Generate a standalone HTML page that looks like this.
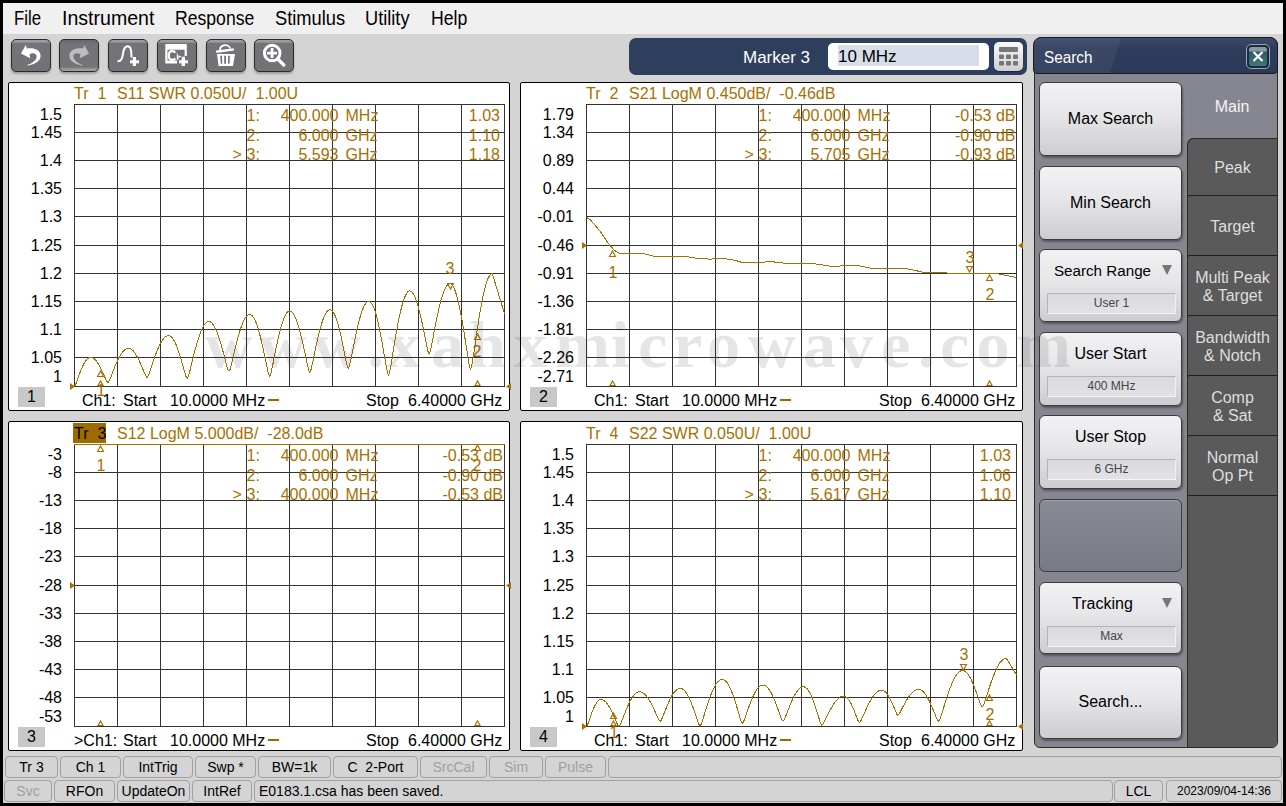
<!DOCTYPE html><html><head><meta charset="utf-8"><style>
*{box-sizing:border-box}
html,body{margin:0;padding:0}
body{width:1286px;height:806px;background:#000;position:relative;overflow:hidden;font-family:"Liberation Sans",sans-serif}
.abs{position:absolute}
#app{position:absolute;left:3px;top:3px;width:1280px;height:800px;background:#d4d4d4}
#menu{position:absolute;left:3px;top:3px;width:1280px;height:31px;background:#f0f0f0}
.mi{position:absolute;top:8px;font-size:20px;line-height:20px;color:#000;white-space:nowrap}
.tb{position:absolute;top:39px;width:40px;height:33px;border:1.5px solid #2a2a2a;border-radius:5px;
 background:linear-gradient(#a0a0a4 0px,#98989c 2px,#747478 3.5px,#727276 100%);box-shadow:0 2px 2px rgba(0,0,0,0.25);overflow:hidden}
.tb svg{position:absolute;left:-1.5px;top:-1.5px}
.panel{position:absolute;background:#fff;border:1px solid #000;border-radius:2px;box-sizing:content-box}
svg.ch{position:absolute}
.hd{position:absolute;font-size:16px;line-height:18px;color:#a67000;white-space:pre}
.yl{position:absolute;font-size:16px;line-height:18px;color:#000;width:80px;text-align:right;white-space:nowrap}
.ro{position:absolute;font-size:16px;line-height:18px;color:#a67000;white-space:pre}
.ro.r{text-align:right}
.chn{position:absolute;width:27px;height:20px;background:#c8c8c8;font-size:16px;line-height:20px;text-align:center;color:#000}
.ct{position:absolute;font-size:16px;line-height:18px;color:#000;white-space:pre}
.sb{position:absolute;height:22px;border:1px solid #a0a0a0;border-radius:4px;background:#d4d4d4;font-size:14px;line-height:20px;text-align:center;color:#000;white-space:nowrap}
.sb.dis{color:#a0a0a0}
.btn{position:absolute;left:1039px;width:143px;border:1px solid #3c3c3c;border-radius:6px;
 background:linear-gradient(#f2f2f4 0%,#e6e6e9 45%,#cdcdd1 100%);box-shadow:1px 2px 2px rgba(0,0,0,0.35)}
.btn .t{position:absolute;left:0;right:0;text-align:center;font-size:16px;color:#000;white-space:nowrap}
.btn .sub{position:absolute;left:7px;width:129px;height:21px;border:1px solid #b4b4b8;border-bottom-color:#f4f4f4;border-right-color:#f0f0f0;
 background:linear-gradient(#dadade,#e2e2e6);font-size:12px;line-height:19px;text-align:center;color:#444}
.btn .arr{position:absolute;right:9px;width:0;height:0;border-left:5px solid transparent;border-right:5px solid transparent;border-top:10px solid #777}
.tab{position:absolute;left:1187px;width:90px;background:#5a5a5a;border-left:1px solid #2c2c1e;border-top:1.5px solid #1e1e1e;border-top-left-radius:3px;padding-top:2px;
 color:#dedede;font-size:16px;line-height:18px;text-align:center;display:flex;align-items:center;justify-content:center}
</style></head><body>
<div id="app"></div>
<div id="menu"></div>

<div class="mi" style="left:14px;transform:scaleX(0.839);transform-origin:0 0">File</div>
<div class="mi" style="left:61.5px;transform:scaleX(0.978);transform-origin:0 0">Instrument</div>
<div class="mi" style="left:174.5px;transform:scaleX(0.880);transform-origin:0 0">Response</div>
<div class="mi" style="left:274.5px;transform:scaleX(0.915);transform-origin:0 0">Stimulus</div>
<div class="mi" style="left:365.2px;transform:scaleX(0.910);transform-origin:0 0">Utility</div>
<div class="mi" style="left:431px;transform:scaleX(0.883);transform-origin:0 0">Help</div>
<div class="tb" style="left:11px"><svg width="40" height="33" viewBox="0 0 40 33"><path d="M10,14.5 L14.8,6 L16,9.6 C21,8.4 29.6,9.6 29.6,17 C29.6,22.5 23,25.8 15.5,26.6 C21,24 25.6,21.5 25.6,17.5 C25.6,14 22,13.6 18.6,15 L19.2,19.2 Z" fill="#fff"/></svg></div>
<div class="tb" style="left:59px;background:linear-gradient(#68686c 0px,#747478 4px,#747478 27px,#9a9a9e 29px,#a0a0a4 31px)"><svg width="40" height="33" viewBox="0 0 40 33"><path d="M30,14.5 L25.2,6 L24,9.6 C19,8.4 10.4,9.6 10.4,17 C10.4,22.5 17,25.8 24.5,26.6 C19,24 14.4,21.5 14.4,17.5 C14.4,14 18,13.6 21.4,15 L20.8,19.2 Z" fill="#bdbdbd"/></svg></div>
<div class="tb" style="left:108px"><svg width="40" height="33" viewBox="0 0 40 33"><path d="M9.5,22.3 C12.5,22.3 14,21 14.8,16 C15.6,10 16.5,7.2 19.6,7.2 C22.6,7.2 23.3,10 23.5,18.5" fill="none" stroke="#fff" stroke-width="2"/><rect x="22" y="21.3" width="9" height="3" fill="#fff"/><rect x="24.8" y="18" width="3.2" height="9" fill="#fff"/></svg></div>
<div class="tb" style="left:157px"><svg width="40" height="33" viewBox="0 0 40 33"><path d="M8.3,5.5 Q8.3,5 9,5 H29 Q29.8,5 29.8,5.8 V17 H27.6 V10.7 H10.5 V21.5 H20 V24.5 H8.3 Z" fill="#fff"/><path d="M18.2,13.6 C17.6,12.6 16.6,12.2 15.3,12.2 C13,12.2 11.8,14 11.8,16.5 C11.8,19 13,20.8 15.3,20.8 C16.6,20.8 17.6,20.3 18.3,19.3" fill="none" stroke="#fff" stroke-width="2.2"/><path d="M19.8,12.3 V20.8 H21.4 V16.3 L24.5,17.6 L21.4,19 Z" fill="#fff"/><rect x="22" y="21.3" width="9" height="3" fill="#fff"/><rect x="24.6" y="17.7" width="3.4" height="9.3" fill="#fff"/></svg></div>
<div class="tb" style="left:206px"><svg width="40" height="33" viewBox="0 0 40 33"><path d="M10,11.6 L27.6,9.2 L28,11.4 L10.4,13.9 Z" fill="#fff"/><path d="M14,11 C14,5 23.6,4.8 24,9.6" fill="none" stroke="#fff" stroke-width="1.8"/><path d="M11,15 H29 L27,27 H12.6 Z" fill="#fff"/><path d="M14.3,16.7 H16.1 L16.2,24.8 H14.7 Z M18.2,16.7 H20 V24.8 H18.2 Z M22.1,16.7 H23.9 L23.5,24.8 H22 Z" fill="#727276"/></svg></div>
<div class="tb" style="left:254px"><svg width="40" height="33" viewBox="0 0 40 33"><circle cx="18.2" cy="14" r="7.8" fill="none" stroke="#fff" stroke-width="3"/><rect x="13" y="12.8" width="10" height="2.7" fill="#fff"/><rect x="16.7" y="9" width="2.7" height="10" fill="#fff"/><path d="M23.8,20 L29.8,26" stroke="#fff" stroke-width="3.4" stroke-linecap="round"/></svg></div>
<div class="abs" style="left:629px;top:38px;width:398px;height:37px;background:#2e3e5d;border-radius:7px"></div>
<div class="abs" style="left:743px;top:48px;font-size:17px;line-height:20px;color:#fff;white-space:nowrap">Marker 3</div>
<div class="abs" style="left:828px;top:43px;width:161px;height:27px;background:#fff;border-radius:5px"></div>
<div class="abs" style="left:838px;top:45px;width:141px;height:21px;background:#d8dee9"></div>
<div class="abs" style="left:838px;top:46.5px;font-size:17px;line-height:20px;color:#000;white-space:nowrap">10 MHz</div>
<div class="abs" style="left:994px;top:42px;width:29px;height:29px;border-radius:5px;background:linear-gradient(#fafafa,#e0e0e2 60%,#cfcfd2);box-shadow:0 1px 1px rgba(0,0,0,.4)">
<svg width="29" height="29" viewBox="0 0 29 29"><rect x="5" y="5" width="19" height="5" rx="1" fill="#777"/><g fill="#777"><rect x="5" y="12.5" width="5" height="4.5" rx="1"/><rect x="12" y="12.5" width="5" height="4.5" rx="1"/><rect x="19" y="12.5" width="5" height="4.5" rx="1"/><rect x="5" y="19" width="5" height="4.5" rx="1"/><rect x="12" y="19" width="5" height="4.5" rx="1"/><rect x="19" y="19" width="5" height="4.5" rx="1"/></g></svg></div>
<div class="panel" style="left:8px;top:82px;width:500px;height:327px"></div>
<svg class="ch" style="left:0;top:0" width="1286" height="806" viewBox="0 0 1286 806">
<rect x="74" y="104" width="431" height="1" fill="#333"/>
<rect x="74" y="132" width="431" height="1" fill="#333"/>
<rect x="74" y="160" width="431" height="1" fill="#333"/>
<rect x="74" y="188" width="431" height="1" fill="#333"/>
<rect x="74" y="216" width="431" height="1" fill="#333"/>
<rect x="74" y="245" width="431" height="1" fill="#333"/>
<rect x="74" y="273" width="431" height="1" fill="#333"/>
<rect x="74" y="301" width="431" height="1" fill="#333"/>
<rect x="74" y="329" width="431" height="1" fill="#333"/>
<rect x="74" y="357" width="431" height="1" fill="#333"/>
<rect x="74" y="386" width="431" height="1" fill="#333"/>
<rect x="74" y="104" width="1" height="283" fill="#333"/>
<rect x="117" y="104" width="1" height="283" fill="#333"/>
<rect x="160" y="104" width="1" height="283" fill="#333"/>
<rect x="203" y="104" width="1" height="283" fill="#333"/>
<rect x="246" y="104" width="1" height="283" fill="#333"/>
<rect x="289" y="104" width="1" height="283" fill="#333"/>
<rect x="332" y="104" width="1" height="283" fill="#333"/>
<rect x="375" y="104" width="1" height="283" fill="#333"/>
<rect x="418" y="104" width="1" height="283" fill="#333"/>
<rect x="461" y="104" width="1" height="283" fill="#333"/>
<rect x="504" y="104" width="1" height="283" fill="#333"/>
<polyline points="74.50,386.00 75.30,385.14 76.10,383.28 76.90,381.11 77.70,378.86 78.50,376.62 79.30,374.42 80.10,372.29 80.90,370.26 81.70,368.33 82.50,366.52 83.30,364.84 84.10,363.32 84.90,361.94 85.70,360.74 86.50,359.70 87.30,358.84 88.10,358.17 88.90,357.69 89.70,357.40 90.50,357.30 91.37,357.39 92.24,357.64 93.11,358.07 93.98,358.66 94.85,359.41 95.72,360.32 96.59,361.38 97.46,362.58 98.33,363.92 99.20,365.39 100.07,366.98 100.94,368.68 101.81,370.46 102.68,372.33 103.55,374.26 104.42,376.23 105.29,378.21 106.16,380.11 107.03,381.74 107.90,382.50 108.93,381.47 109.95,379.25 110.98,376.67 112.00,373.99 113.03,371.32 114.05,368.70 115.08,366.17 116.10,363.74 117.12,361.44 118.15,359.29 119.18,357.29 120.20,355.47 121.23,353.83 122.25,352.39 123.28,351.16 124.30,350.14 125.33,349.34 126.35,348.76 127.38,348.42 128.40,348.30 129.33,348.40 130.26,348.69 131.19,349.18 132.12,349.86 133.05,350.73 133.98,351.78 134.91,353.01 135.84,354.40 136.77,355.95 137.70,357.65 138.63,359.48 139.56,361.44 140.49,363.50 141.42,365.66 142.35,367.89 143.28,370.16 144.21,372.44 145.14,374.64 146.07,376.52 147.00,377.40 148.08,376.14 149.16,373.43 150.24,370.28 151.32,367.00 152.40,363.74 153.48,360.54 154.56,357.44 155.64,354.47 156.72,351.66 157.80,349.03 158.88,346.59 159.96,344.36 161.04,342.36 162.12,340.60 163.20,339.10 164.28,337.85 165.36,336.87 166.44,336.17 167.52,335.74 168.60,335.60 169.53,335.75 170.46,336.18 171.39,336.90 172.32,337.91 173.25,339.19 174.18,340.74 175.11,342.54 176.04,344.59 176.97,346.88 177.90,349.38 178.83,352.08 179.76,354.97 180.69,358.01 181.62,361.19 182.55,364.48 183.48,367.83 184.41,371.19 185.34,374.43 186.27,377.21 187.20,378.50 188.28,376.79 189.36,373.09 190.44,368.79 191.52,364.32 192.60,359.87 193.68,355.50 194.76,351.28 195.84,347.23 196.92,343.40 198.00,339.81 199.08,336.48 200.16,333.45 201.24,330.72 202.32,328.32 203.40,326.27 204.48,324.56 205.56,323.23 206.64,322.27 207.72,321.69 208.80,321.50 209.81,321.67 210.82,322.17 211.83,323.01 212.84,324.18 213.85,325.66 214.86,327.46 215.87,329.56 216.88,331.94 217.89,334.59 218.90,337.50 219.91,340.63 220.92,343.98 221.93,347.52 222.94,351.21 223.95,355.02 224.96,358.91 225.97,362.81 226.98,366.57 227.99,369.80 229.00,371.30 230.03,369.59 231.07,365.90 232.10,361.60 233.14,357.15 234.18,352.70 235.21,348.34 236.25,344.12 237.28,340.09 238.31,336.26 239.35,332.68 240.38,329.36 241.42,326.33 242.45,323.61 243.49,321.21 244.52,319.16 245.56,317.46 246.59,316.13 247.63,315.17 248.66,314.59 249.70,314.40 250.70,314.61 251.70,315.24 252.70,316.28 253.70,317.72 254.70,319.57 255.70,321.80 256.70,324.40 257.70,327.36 258.70,330.65 259.70,334.25 260.70,338.14 261.70,342.30 262.70,346.68 263.70,351.27 264.70,356.00 265.70,360.83 266.70,365.67 267.70,370.33 268.70,374.34 269.70,376.20 270.70,374.24 271.70,370.01 272.70,365.09 273.70,359.98 274.70,354.89 275.70,349.89 276.70,345.06 277.70,340.43 278.70,336.05 279.70,331.94 280.70,328.14 281.70,324.67 282.70,321.55 283.70,318.80 284.70,316.45 285.70,314.51 286.70,312.98 287.70,311.88 288.70,311.22 289.70,311.00 290.70,311.21 291.71,311.83 292.71,312.86 293.72,314.29 294.73,316.12 295.73,318.33 296.74,320.90 297.74,323.83 298.75,327.09 299.75,330.66 300.75,334.51 301.76,338.63 302.76,342.97 303.77,347.51 304.77,352.20 305.78,356.98 306.79,361.77 307.79,366.39 308.80,370.36 309.80,372.20 310.81,370.32 311.82,366.27 312.83,361.55 313.84,356.66 314.85,351.77 315.86,346.98 316.87,342.35 317.88,337.92 318.89,333.71 319.90,329.78 320.91,326.13 321.92,322.80 322.93,319.81 323.94,317.18 324.95,314.93 325.96,313.06 326.97,311.60 327.98,310.55 328.99,309.91 330.00,309.70 330.92,309.90 331.83,310.49 332.75,311.48 333.66,312.86 334.57,314.61 335.49,316.73 336.41,319.20 337.32,322.01 338.24,325.13 339.15,328.56 340.06,332.25 340.98,336.20 341.89,340.37 342.81,344.72 343.73,349.21 344.64,353.80 345.56,358.40 346.47,362.83 347.38,366.63 348.30,368.40 349.32,366.38 350.35,362.04 351.38,356.98 352.40,351.74 353.43,346.50 354.45,341.37 355.48,336.40 356.50,331.65 357.53,327.14 358.55,322.92 359.57,319.01 360.60,315.45 361.62,312.24 362.65,309.42 363.68,307.00 364.70,305.00 365.73,303.43 366.75,302.31 367.78,301.63 368.80,301.40 369.79,301.65 370.77,302.40 371.75,303.64 372.74,305.36 373.73,307.56 374.71,310.22 375.69,313.32 376.68,316.85 377.67,320.77 378.65,325.07 379.63,329.72 380.62,334.67 381.61,339.90 382.59,345.36 383.57,351.01 384.56,356.77 385.55,362.54 386.53,368.10 387.51,372.88 388.50,375.10 389.56,372.57 390.62,367.11 391.68,360.75 392.74,354.16 393.80,347.58 394.86,341.13 395.92,334.89 396.98,328.91 398.04,323.25 399.10,317.95 400.16,313.03 401.22,308.55 402.28,304.52 403.34,300.98 404.40,297.94 405.46,295.43 406.52,293.46 407.58,292.04 408.64,291.19 409.70,290.90 410.67,291.11 411.64,291.75 412.61,292.81 413.58,294.29 414.55,296.17 415.52,298.44 416.49,301.09 417.46,304.11 418.43,307.46 419.40,311.14 420.37,315.11 421.34,319.34 422.31,323.81 423.28,328.48 424.25,333.31 425.22,338.23 426.19,343.16 427.16,347.92 428.13,352.01 429.10,353.90 430.14,351.78 431.18,347.22 432.22,341.90 433.26,336.39 434.30,330.89 435.34,325.50 436.38,320.28 437.42,315.28 438.46,310.55 439.50,306.11 440.54,302.01 441.58,298.26 442.62,294.89 443.66,291.93 444.70,289.39 445.74,287.29 446.78,285.64 447.82,284.45 448.86,283.74 449.90,283.50 450.94,283.79 451.97,284.66 453.00,286.10 454.04,288.10 455.07,290.66 456.11,293.75 457.14,297.35 458.18,301.44 459.21,306.00 460.25,311.00 461.29,316.39 462.32,322.14 463.36,328.22 464.39,334.56 465.43,341.12 466.46,347.81 467.50,354.51 468.53,360.98 469.56,366.53 470.60,369.10 471.69,366.22 472.77,360.03 473.86,352.81 474.94,345.32 476.03,337.85 477.11,330.53 478.19,323.44 479.28,316.66 480.37,310.23 481.45,304.21 482.54,298.63 483.62,293.54 484.71,288.97 485.79,284.94 486.88,281.49 487.96,278.64 489.05,276.40 490.13,274.79 491.22,273.82 492.30,273.50 504.5,313.7" fill="none" stroke="#a67000" stroke-width="1" shape-rendering="crispEdges"/>
<path d="M97.5,376.5 L100.5,371.0 L103.5,376.5 Z" fill="none" stroke="#a67000" stroke-width="1.2"/><path d="M98.0,385.5 L100.5,381.0 L103.0,385.5 Z" fill="none" stroke="#a67000" stroke-width="1.2"/><text x="101" y="396" font-family="Liberation Sans" font-size="16" fill="#a67000" text-anchor="middle">1</text><path d="M447.5,283.5 L450.5,289.0 L453.5,283.5 Z" fill="none" stroke="#a67000" stroke-width="1.2"/><text x="450" y="274" font-family="Liberation Sans" font-size="16" fill="#a67000" text-anchor="middle">3</text><path d="M474.5,339.5 L477.5,334.0 L480.5,339.5 Z" fill="none" stroke="#a67000" stroke-width="1.2"/><text x="477" y="357" font-family="Liberation Sans" font-size="16" fill="#a67000" text-anchor="middle">2</text><path d="M475.0,385.5 L477.5,381.0 L480.0,385.5 Z" fill="none" stroke="#a67000" stroke-width="1.2"/><path d="M70,383 L75,386.5 L70,390 Z" fill="#a67000"/><path d="M511,383 L506,386.5 L511,390 Z" fill="#a67000"/>
</svg>
<div class="hd" style="left:74px;top:85px">Tr&nbsp;&nbsp;1</div>
<div class="hd" style="left:117px;top:85px">S11 SWR 0.050U/&nbsp;&nbsp;1.00U</div>
<div class="yl" style="left:-18px;top:106px">1.5</div>
<div class="yl" style="left:-18px;top:124px">1.45</div>
<div class="yl" style="left:-18px;top:152px">1.4</div>
<div class="yl" style="left:-18px;top:180px">1.35</div>
<div class="yl" style="left:-18px;top:208px">1.3</div>
<div class="yl" style="left:-18px;top:237px">1.25</div>
<div class="yl" style="left:-18px;top:265px">1.2</div>
<div class="yl" style="left:-18px;top:293px">1.15</div>
<div class="yl" style="left:-18px;top:321px">1.1</div>
<div class="yl" style="left:-18px;top:349px">1.05</div>
<div class="yl" style="left:-18px;top:368px">1</div>
<div class="ro" style="left:246.5px;top:107.0px">1:</div>
<div class="ro r" style="left:238.5px;top:107.0px;width:100px">400.000</div>
<div class="ro" style="left:345.5px;top:107.0px">MHz</div>
<div class="ro r" style="left:350px;top:107.0px;width:150px">1.03</div>
<div class="ro" style="left:246.5px;top:126.6px">2:</div>
<div class="ro r" style="left:238.5px;top:126.6px;width:100px">6.000</div>
<div class="ro" style="left:345.5px;top:126.6px">GHz</div>
<div class="ro r" style="left:350px;top:126.6px;width:150px">1.10</div>
<div class="ro" style="left:232.5px;top:146.2px">&gt;</div>
<div class="ro" style="left:246.5px;top:146.2px">3:</div>
<div class="ro r" style="left:238.5px;top:146.2px;width:100px">5.593</div>
<div class="ro" style="left:345.5px;top:146.2px">GHz</div>
<div class="ro r" style="left:350px;top:146.2px;width:150px">1.18</div>
<div class="chn" style="left:18px;top:387px">1</div>
<div class="ct" style="left:82px;top:392px">Ch1:</div>
<div class="ct" style="left:123px;top:392px">Start</div>
<div class="ct" style="left:170px;top:392px">10.0000 MHz</div>
<div style="position:absolute;left:268px;top:399px;width:11px;height:2px;background:#9c6800"></div>
<div class="ct" style="left:366px;top:392px">Stop</div>
<div class="ct" style="left:408px;top:392px">6.40000 GHz</div>
<div class="panel" style="left:520px;top:82px;width:501px;height:327px"></div>
<svg class="ch" style="left:0;top:0" width="1286" height="806" viewBox="0 0 1286 806">
<rect x="586" y="104" width="431" height="1" fill="#333"/>
<rect x="586" y="132" width="431" height="1" fill="#333"/>
<rect x="586" y="160" width="431" height="1" fill="#333"/>
<rect x="586" y="188" width="431" height="1" fill="#333"/>
<rect x="586" y="216" width="431" height="1" fill="#333"/>
<rect x="586" y="245" width="431" height="1" fill="#333"/>
<rect x="586" y="273" width="431" height="1" fill="#333"/>
<rect x="586" y="301" width="431" height="1" fill="#333"/>
<rect x="586" y="329" width="431" height="1" fill="#333"/>
<rect x="586" y="357" width="431" height="1" fill="#333"/>
<rect x="586" y="386" width="431" height="1" fill="#333"/>
<rect x="586" y="104" width="1" height="283" fill="#333"/>
<rect x="629" y="104" width="1" height="283" fill="#333"/>
<rect x="672" y="104" width="1" height="283" fill="#333"/>
<rect x="715" y="104" width="1" height="283" fill="#333"/>
<rect x="758" y="104" width="1" height="283" fill="#333"/>
<rect x="801" y="104" width="1" height="283" fill="#333"/>
<rect x="844" y="104" width="1" height="283" fill="#333"/>
<rect x="887" y="104" width="1" height="283" fill="#333"/>
<rect x="930" y="104" width="1" height="283" fill="#333"/>
<rect x="973" y="104" width="1" height="283" fill="#333"/>
<rect x="1016" y="104" width="1" height="283" fill="#333"/>
<polyline points="586.5,217.5 590,219.5 600,231 608,243 614,250 618,252.5 620,253.5 643,253.5 653,256 675,256 686,256.5 698,258.5 708,259 712,259 720,258.5 724,258.5 736,260.5 742,262.5 760,262.5 770,261.5 792,264 810,263 832,266.5 855,265 875,269 906,268.5 922,272 960,273.5 996,273.5 1016.5,277.5" fill="none" stroke="#a67000" stroke-width="1" shape-rendering="crispEdges"/>
<path d="M609.5,256.5 L612.5,251.0 L615.5,256.5 Z" fill="none" stroke="#a67000" stroke-width="1.2"/><text x="613" y="278" font-family="Liberation Sans" font-size="16" fill="#a67000" text-anchor="middle">1</text><path d="M610.0,385.5 L612.5,381.0 L615.0,385.5 Z" fill="none" stroke="#a67000" stroke-width="1.2"/><path d="M966.5,266.5 L969.5,272.0 L972.5,266.5 Z" fill="none" stroke="#a67000" stroke-width="1.2"/><text x="970" y="263" font-family="Liberation Sans" font-size="16" fill="#a67000" text-anchor="middle">3</text><path d="M986.5,280.5 L989.5,275.0 L992.5,280.5 Z" fill="none" stroke="#a67000" stroke-width="1.2"/><text x="990" y="300" font-family="Liberation Sans" font-size="16" fill="#a67000" text-anchor="middle">2</text><path d="M987.0,385.5 L989.5,381.0 L992.0,385.5 Z" fill="none" stroke="#a67000" stroke-width="1.2"/><path d="M582,242 L587,245.5 L582,249 Z" fill="#a67000"/><path d="M1023,242 L1018,245.5 L1023,249 Z" fill="#a67000"/>
</svg>
<div class="hd" style="left:586px;top:85px">Tr&nbsp;&nbsp;2</div>
<div class="hd" style="left:629px;top:85px">S21 LogM 0.450dB/&nbsp;&nbsp;-0.46dB</div>
<div class="yl" style="left:494px;top:106px">1.79</div>
<div class="yl" style="left:494px;top:124px">1.34</div>
<div class="yl" style="left:494px;top:152px">0.89</div>
<div class="yl" style="left:494px;top:180px">0.44</div>
<div class="yl" style="left:494px;top:208px">-0.01</div>
<div class="yl" style="left:494px;top:237px">-0.46</div>
<div class="yl" style="left:494px;top:265px">-0.91</div>
<div class="yl" style="left:494px;top:293px">-1.36</div>
<div class="yl" style="left:494px;top:321px">-1.81</div>
<div class="yl" style="left:494px;top:349px">-2.26</div>
<div class="yl" style="left:494px;top:368px">-2.71</div>
<div class="ro" style="left:758.5px;top:107.0px">1:</div>
<div class="ro r" style="left:750.5px;top:107.0px;width:100px">400.000</div>
<div class="ro" style="left:857.5px;top:107.0px">MHz</div>
<div class="ro r" style="left:865.5px;top:107.0px;width:150px">-0.53 dB</div>
<div class="ro" style="left:758.5px;top:126.6px">2:</div>
<div class="ro r" style="left:750.5px;top:126.6px;width:100px">6.000</div>
<div class="ro" style="left:857.5px;top:126.6px">GHz</div>
<div class="ro r" style="left:865.5px;top:126.6px;width:150px">-0.90 dB</div>
<div class="ro" style="left:744.5px;top:146.2px">&gt;</div>
<div class="ro" style="left:758.5px;top:146.2px">3:</div>
<div class="ro r" style="left:750.5px;top:146.2px;width:100px">5.705</div>
<div class="ro" style="left:857.5px;top:146.2px">GHz</div>
<div class="ro r" style="left:865.5px;top:146.2px;width:150px">-0.93 dB</div>
<div class="chn" style="left:530px;top:387px">2</div>
<div class="ct" style="left:594px;top:392px">Ch1:</div>
<div class="ct" style="left:635px;top:392px">Start</div>
<div class="ct" style="left:682px;top:392px">10.0000 MHz</div>
<div style="position:absolute;left:780px;top:399px;width:11px;height:2px;background:#9c6800"></div>
<div class="ct" style="left:879px;top:392px">Stop</div>
<div class="ct" style="left:921px;top:392px">6.40000 GHz</div>
<div class="panel" style="left:8px;top:421px;width:500px;height:328px"></div>
<svg class="ch" style="left:0;top:0" width="1286" height="806" viewBox="0 0 1286 806">
<rect x="74" y="444" width="431" height="1" fill="#333"/>
<rect x="74" y="472" width="431" height="1" fill="#333"/>
<rect x="74" y="500" width="431" height="1" fill="#333"/>
<rect x="74" y="528" width="431" height="1" fill="#333"/>
<rect x="74" y="556" width="431" height="1" fill="#333"/>
<rect x="74" y="585" width="431" height="1" fill="#333"/>
<rect x="74" y="613" width="431" height="1" fill="#333"/>
<rect x="74" y="641" width="431" height="1" fill="#333"/>
<rect x="74" y="669" width="431" height="1" fill="#333"/>
<rect x="74" y="697" width="431" height="1" fill="#333"/>
<rect x="74" y="726" width="431" height="1" fill="#333"/>
<rect x="74" y="444" width="1" height="283" fill="#333"/>
<rect x="117" y="444" width="1" height="283" fill="#333"/>
<rect x="160" y="444" width="1" height="283" fill="#333"/>
<rect x="203" y="444" width="1" height="283" fill="#333"/>
<rect x="246" y="444" width="1" height="283" fill="#333"/>
<rect x="289" y="444" width="1" height="283" fill="#333"/>
<rect x="332" y="444" width="1" height="283" fill="#333"/>
<rect x="375" y="444" width="1" height="283" fill="#333"/>
<rect x="418" y="444" width="1" height="283" fill="#333"/>
<rect x="461" y="444" width="1" height="283" fill="#333"/>
<rect x="504" y="444" width="1" height="283" fill="#333"/>
<rect x="74" y="444" width="431" height="1" fill="#a67000"/>
<path d="M97.5,451.5 L100.5,446.0 L103.5,451.5 Z" fill="none" stroke="#a67000" stroke-width="1.2"/><text x="101" y="471" font-family="Liberation Sans" font-size="16" fill="#a67000" text-anchor="middle">1</text><path d="M98.0,725.5 L100.5,721.0 L103.0,725.5 Z" fill="none" stroke="#a67000" stroke-width="1.2"/><path d="M474.5,450.5 L477.5,445.0 L480.5,450.5 Z" fill="none" stroke="#a67000" stroke-width="1.2"/><text x="477" y="471" font-family="Liberation Sans" font-size="16" fill="#a67000" text-anchor="middle">2</text><path d="M475.0,725.5 L477.5,721.0 L480.0,725.5 Z" fill="none" stroke="#a67000" stroke-width="1.2"/><path d="M70,582 L75,585.5 L70,589 Z" fill="#a67000"/><path d="M511,582 L506,585.5 L511,589 Z" fill="#a67000"/>
</svg>
<div style="position:absolute;left:73px;top:423px;width:33px;height:20px;background:#9e6b00"></div>
<div class="hd" style="left:74px;top:425px;color:#000">Tr&nbsp;&nbsp;3</div>
<div class="hd" style="left:117px;top:425px">S12 LogM 5.000dB/&nbsp;&nbsp;-28.0dB</div>
<div class="yl" style="left:-18px;top:446px">-3</div>
<div class="yl" style="left:-18px;top:464px">-8</div>
<div class="yl" style="left:-18px;top:492px">-13</div>
<div class="yl" style="left:-18px;top:520px">-18</div>
<div class="yl" style="left:-18px;top:548px">-23</div>
<div class="yl" style="left:-18px;top:577px">-28</div>
<div class="yl" style="left:-18px;top:605px">-33</div>
<div class="yl" style="left:-18px;top:633px">-38</div>
<div class="yl" style="left:-18px;top:661px">-43</div>
<div class="yl" style="left:-18px;top:689px">-48</div>
<div class="yl" style="left:-18px;top:708px">-53</div>
<div class="ro" style="left:246.5px;top:447.0px">1:</div>
<div class="ro r" style="left:238.5px;top:447.0px;width:100px">400.000</div>
<div class="ro" style="left:345.5px;top:447.0px">MHz</div>
<div class="ro r" style="left:353px;top:447.0px;width:150px">-0.53 dB</div>
<div class="ro" style="left:246.5px;top:466.6px">2:</div>
<div class="ro r" style="left:238.5px;top:466.6px;width:100px">6.000</div>
<div class="ro" style="left:345.5px;top:466.6px">GHz</div>
<div class="ro r" style="left:353px;top:466.6px;width:150px">-0.90 dB</div>
<div class="ro" style="left:232.5px;top:486.2px">&gt;</div>
<div class="ro" style="left:246.5px;top:486.2px">3:</div>
<div class="ro r" style="left:238.5px;top:486.2px;width:100px">400.000</div>
<div class="ro" style="left:345.5px;top:486.2px">MHz</div>
<div class="ro r" style="left:353px;top:486.2px;width:150px">-0.53 dB</div>
<div class="chn" style="left:18px;top:727px">3</div>
<div class="ct" style="left:74px;top:732px">&gt;Ch1:</div>
<div class="ct" style="left:123px;top:732px">Start</div>
<div class="ct" style="left:170px;top:732px">10.0000 MHz</div>
<div style="position:absolute;left:268px;top:739px;width:11px;height:2px;background:#9c6800"></div>
<div class="ct" style="left:366px;top:732px">Stop</div>
<div class="ct" style="left:408px;top:732px">6.40000 GHz</div>
<div class="panel" style="left:520px;top:421px;width:501px;height:328px"></div>
<svg class="ch" style="left:0;top:0" width="1286" height="806" viewBox="0 0 1286 806">
<rect x="586" y="444" width="431" height="1" fill="#333"/>
<rect x="586" y="472" width="431" height="1" fill="#333"/>
<rect x="586" y="500" width="431" height="1" fill="#333"/>
<rect x="586" y="528" width="431" height="1" fill="#333"/>
<rect x="586" y="556" width="431" height="1" fill="#333"/>
<rect x="586" y="585" width="431" height="1" fill="#333"/>
<rect x="586" y="613" width="431" height="1" fill="#333"/>
<rect x="586" y="641" width="431" height="1" fill="#333"/>
<rect x="586" y="669" width="431" height="1" fill="#333"/>
<rect x="586" y="697" width="431" height="1" fill="#333"/>
<rect x="586" y="726" width="431" height="1" fill="#333"/>
<rect x="586" y="444" width="1" height="283" fill="#333"/>
<rect x="629" y="444" width="1" height="283" fill="#333"/>
<rect x="672" y="444" width="1" height="283" fill="#333"/>
<rect x="715" y="444" width="1" height="283" fill="#333"/>
<rect x="758" y="444" width="1" height="283" fill="#333"/>
<rect x="801" y="444" width="1" height="283" fill="#333"/>
<rect x="844" y="444" width="1" height="283" fill="#333"/>
<rect x="887" y="444" width="1" height="283" fill="#333"/>
<rect x="930" y="444" width="1" height="283" fill="#333"/>
<rect x="973" y="444" width="1" height="283" fill="#333"/>
<rect x="1016" y="444" width="1" height="283" fill="#333"/>
<polyline points="586.50,726.30 587.23,725.49 587.95,723.76 588.67,721.73 589.40,719.63 590.12,717.54 590.85,715.49 591.58,713.50 592.30,711.60 593.02,709.80 593.75,708.11 594.48,706.55 595.20,705.12 595.92,703.84 596.65,702.71 597.38,701.74 598.10,700.94 598.83,700.31 599.55,699.86 600.27,699.59 601.00,699.50 601.89,699.59 602.79,699.86 603.68,700.31 604.58,700.94 605.48,701.74 606.37,702.71 607.26,703.84 608.16,705.12 609.05,706.55 609.95,708.11 610.85,709.80 611.74,711.60 612.63,713.50 613.53,715.49 614.42,717.54 615.32,719.63 616.22,721.73 617.11,723.76 618.00,725.49 618.90,726.30 619.93,725.26 620.97,723.02 622.00,720.40 623.04,717.69 624.08,714.99 625.11,712.34 626.14,709.78 627.18,707.32 628.22,704.99 629.25,702.81 630.28,700.80 631.32,698.95 632.36,697.30 633.39,695.84 634.42,694.59 635.46,693.56 636.50,692.75 637.53,692.17 638.57,691.82 639.60,691.70 640.63,691.80 641.66,692.10 642.69,692.60 643.72,693.29 644.75,694.17 645.78,695.23 646.81,696.47 647.84,697.88 648.87,699.46 649.90,701.18 650.93,703.03 651.96,705.02 652.99,707.11 654.02,709.30 655.05,711.56 656.08,713.86 657.11,716.17 658.14,718.40 659.17,720.31 660.20,721.20 661.21,720.21 662.21,718.08 663.22,715.59 664.22,713.02 665.23,710.45 666.23,707.93 667.24,705.49 668.24,703.15 669.25,700.94 670.25,698.87 671.25,696.95 672.26,695.20 673.26,693.62 674.27,692.24 675.27,691.05 676.28,690.07 677.28,689.30 678.29,688.75 679.29,688.41 680.30,688.30 681.28,688.43 682.27,688.80 683.25,689.43 684.24,690.31 685.22,691.42 686.21,692.76 687.19,694.34 688.18,696.12 689.16,698.11 690.15,700.28 691.13,702.63 692.12,705.14 693.11,707.79 694.09,710.55 695.08,713.41 696.06,716.32 697.04,719.24 698.03,722.06 699.01,724.48 700.00,725.60 701.12,724.21 702.23,721.21 703.35,717.73 704.46,714.11 705.58,710.50 706.69,706.96 707.80,703.54 708.92,700.26 710.03,697.15 711.15,694.24 712.26,691.55 713.38,689.08 714.50,686.88 715.61,684.93 716.72,683.26 717.84,681.88 718.95,680.80 720.07,680.03 721.18,679.56 722.30,679.40 723.30,679.55 724.31,679.99 725.31,680.72 726.32,681.74 727.32,683.05 728.33,684.62 729.33,686.45 730.34,688.54 731.34,690.86 732.35,693.40 733.36,696.15 734.36,699.08 735.37,702.18 736.37,705.41 737.38,708.75 738.38,712.16 739.38,715.57 740.39,718.86 741.39,721.69 742.40,723.00 743.43,721.86 744.46,719.39 745.49,716.52 746.52,713.55 747.55,710.58 748.58,707.67 749.61,704.85 750.64,702.15 751.67,699.60 752.70,697.21 753.73,694.99 754.76,692.97 755.79,691.15 756.82,689.55 757.85,688.18 758.88,687.04 759.91,686.15 760.94,685.51 761.97,685.13 763.00,685.00 764.00,685.12 765.00,685.49 766.00,686.10 767.00,686.95 768.00,688.03 769.00,689.33 770.00,690.86 771.00,692.59 772.00,694.52 773.00,696.63 774.00,698.91 775.00,701.34 776.00,703.91 777.00,706.59 778.00,709.37 779.00,712.20 780.00,715.03 781.00,717.76 782.00,720.11 783.00,721.20 784.02,720.17 785.05,717.93 786.08,715.34 787.10,712.64 788.12,709.96 789.15,707.32 790.17,704.77 791.20,702.33 792.23,700.02 793.25,697.85 794.27,695.84 795.30,694.01 796.33,692.37 797.35,690.92 798.38,689.68 799.40,688.65 800.42,687.84 801.45,687.27 802.48,686.92 803.50,686.80 804.41,686.93 805.33,687.32 806.25,687.97 807.16,688.86 808.08,690.01 808.99,691.40 809.90,693.01 810.82,694.85 811.74,696.89 812.65,699.13 813.56,701.55 814.48,704.14 815.39,706.86 816.31,709.71 817.22,712.65 818.14,715.65 819.05,718.66 819.97,721.56 820.88,724.05 821.80,725.20 822.89,724.32 823.99,722.44 825.08,720.24 826.18,717.96 827.27,715.69 828.37,713.46 829.47,711.30 830.56,709.24 831.65,707.28 832.75,705.45 833.85,703.75 834.94,702.20 836.03,700.81 837.13,699.58 838.23,698.53 839.32,697.66 840.42,696.98 841.51,696.49 842.61,696.20 843.70,696.10 844.48,696.19 845.26,696.46 846.04,696.90 846.82,697.52 847.60,698.31 848.38,699.26 849.16,700.37 849.94,701.63 850.72,703.04 851.50,704.58 852.28,706.24 853.06,708.02 853.84,709.89 854.62,711.85 855.40,713.87 856.18,715.93 856.96,718.00 857.74,719.99 858.52,721.71 859.30,722.50 860.42,721.53 861.54,719.42 862.66,716.98 863.78,714.44 864.90,711.91 866.02,709.43 867.14,707.03 868.26,704.73 869.38,702.55 870.50,700.51 871.62,698.62 872.74,696.89 873.86,695.34 874.98,693.98 876.10,692.81 877.22,691.84 878.34,691.08 879.46,690.54 880.58,690.21 881.70,690.10 882.50,690.18 883.31,690.44 884.12,690.86 884.92,691.44 885.73,692.19 886.53,693.09 887.34,694.14 888.14,695.34 888.95,696.67 889.75,698.13 890.55,699.71 891.36,701.39 892.16,703.16 892.97,705.01 893.77,706.93 894.58,708.88 895.38,710.84 896.19,712.73 897.00,714.35 897.80,715.10 898.83,714.33 899.87,712.66 900.90,710.72 901.94,708.71 902.97,706.70 904.01,704.73 905.04,702.83 906.08,701.00 907.12,699.27 908.15,697.66 909.18,696.16 910.22,694.79 911.25,693.56 912.29,692.48 913.33,691.55 914.36,690.78 915.39,690.18 916.43,689.75 917.47,689.49 918.50,689.40 919.50,689.51 920.51,689.83 921.51,690.37 922.52,691.11 923.52,692.06 924.53,693.21 925.53,694.55 926.54,696.07 927.54,697.76 928.55,699.61 929.56,701.62 930.56,703.76 931.57,706.01 932.57,708.37 933.58,710.81 934.58,713.29 935.59,715.78 936.59,718.18 937.60,720.24 938.60,721.20 939.80,719.68 940.99,716.39 942.19,712.56 943.38,708.59 944.58,704.63 945.77,700.74 946.97,696.99 948.16,693.39 949.36,689.98 950.55,686.79 951.75,683.83 952.94,681.13 954.13,678.70 955.33,676.57 956.52,674.74 957.72,673.23 958.91,672.04 960.11,671.19 961.30,670.67 962.50,670.50 963.49,670.62 964.47,670.99 965.46,671.61 966.44,672.46 967.42,673.54 968.41,674.86 969.39,676.39 970.38,678.13 971.37,680.07 972.35,682.19 973.34,684.49 974.32,686.93 975.31,689.52 976.29,692.21 977.28,695.00 978.26,697.85 979.25,700.70 980.23,703.45 981.22,705.81 982.20,706.90 983.41,705.44 984.61,702.28 985.82,698.60 987.02,694.79 988.23,690.98 989.43,687.25 990.63,683.64 991.84,680.19 993.04,676.91 994.25,673.84 995.46,671.00 996.66,668.41 997.87,666.08 999.07,664.03 1000.27,662.27 1001.48,660.82 1002.68,659.68 1003.89,658.86 1005.09,658.36 1006.30,658.20 1016.5,674.9" fill="none" stroke="#a67000" stroke-width="1" shape-rendering="crispEdges"/>
<path d="M610.5,718.5 L613.5,713.0 L616.5,718.5 Z" fill="none" stroke="#a67000" stroke-width="1.2"/><text x="614" y="738" font-family="Liberation Sans" font-size="16" fill="#a67000" text-anchor="middle">1</text><path d="M611.0,725.5 L613.5,721.0 L616.0,725.5 Z" fill="none" stroke="#a67000" stroke-width="1.2"/><path d="M960.5,664.5 L963.5,670.0 L966.5,664.5 Z" fill="none" stroke="#a67000" stroke-width="1.2"/><text x="964" y="660" font-family="Liberation Sans" font-size="16" fill="#a67000" text-anchor="middle">3</text><path d="M986.5,700.5 L989.5,695.0 L992.5,700.5 Z" fill="none" stroke="#a67000" stroke-width="1.2"/><text x="990" y="720" font-family="Liberation Sans" font-size="16" fill="#a67000" text-anchor="middle">2</text><path d="M987.0,725.5 L989.5,721.0 L992.0,725.5 Z" fill="none" stroke="#a67000" stroke-width="1.2"/><path d="M582,723 L587,726.5 L582,730 Z" fill="#a67000"/><path d="M1023,723 L1018,726.5 L1023,730 Z" fill="#a67000"/>
</svg>
<div class="hd" style="left:586px;top:425px">Tr&nbsp;&nbsp;4</div>
<div class="hd" style="left:629px;top:425px">S22 SWR 0.050U/&nbsp;&nbsp;1.00U</div>
<div class="yl" style="left:494px;top:446px">1.5</div>
<div class="yl" style="left:494px;top:464px">1.45</div>
<div class="yl" style="left:494px;top:492px">1.4</div>
<div class="yl" style="left:494px;top:520px">1.35</div>
<div class="yl" style="left:494px;top:548px">1.3</div>
<div class="yl" style="left:494px;top:577px">1.25</div>
<div class="yl" style="left:494px;top:605px">1.2</div>
<div class="yl" style="left:494px;top:633px">1.15</div>
<div class="yl" style="left:494px;top:661px">1.1</div>
<div class="yl" style="left:494px;top:689px">1.05</div>
<div class="yl" style="left:494px;top:708px">1</div>
<div class="ro" style="left:758.5px;top:447.0px">1:</div>
<div class="ro r" style="left:750.5px;top:447.0px;width:100px">400.000</div>
<div class="ro" style="left:857.5px;top:447.0px">MHz</div>
<div class="ro r" style="left:861px;top:447.0px;width:150px">1.03</div>
<div class="ro" style="left:758.5px;top:466.6px">2:</div>
<div class="ro r" style="left:750.5px;top:466.6px;width:100px">6.000</div>
<div class="ro" style="left:857.5px;top:466.6px">GHz</div>
<div class="ro r" style="left:861px;top:466.6px;width:150px">1.06</div>
<div class="ro" style="left:744.5px;top:486.2px">&gt;</div>
<div class="ro" style="left:758.5px;top:486.2px">3:</div>
<div class="ro r" style="left:750.5px;top:486.2px;width:100px">5.617</div>
<div class="ro" style="left:857.5px;top:486.2px">GHz</div>
<div class="ro r" style="left:861px;top:486.2px;width:150px">1.10</div>
<div class="chn" style="left:530px;top:727px">4</div>
<div class="ct" style="left:594px;top:732px">Ch1:</div>
<div class="ct" style="left:635px;top:732px">Start</div>
<div class="ct" style="left:682px;top:732px">10.0000 MHz</div>
<div style="position:absolute;left:780px;top:739px;width:11px;height:2px;background:#9c6800"></div>
<div class="ct" style="left:879px;top:732px">Stop</div>
<div class="ct" style="left:921px;top:732px">6.40000 GHz</div>
<div class="abs" style="left:1034px;top:37px;width:244px;height:711px;background:#868690;border:1px solid #2c2c20;border-radius:8px 8px 6px 6px"></div>
<div class="abs" style="left:1187px;top:138px;width:90px;height:609px;background:#5a5a5a;border-left:1px solid #2c2c1e;border-top:1px solid #2c2c1e;border-top-left-radius:7px;border-bottom-right-radius:5px"></div>
<div class="tab" style="top:138px;height:57px;border-top:1px solid #2c2c1e;border-top-left-radius:7px;">Peak</div>
<div class="tab" style="top:195px;height:60px;">Target</div>
<div class="tab" style="top:255px;height:60px;">Multi Peak<br>&amp; Target</div>
<div class="tab" style="top:315px;height:60px;">Bandwidth<br>&amp; Notch</div>
<div class="tab" style="top:375px;height:60px;">Comp<br>&amp; Sat</div>
<div class="tab" style="top:435px;height:60px;">Normal<br>Op Pt</div>
<div class="abs" style="left:1187px;top:495px;width:90px;height:1px;background:#1e1e1e"></div>
<div class="abs" style="left:1187px;top:98px;width:90px;text-align:center;font-size:16px;line-height:18px;color:#f4f4f4">Main</div>
<div class="abs" style="left:1033px;top:37px;width:245px;height:37px;background:linear-gradient(#3a4a6a,#2e3d5c 30%,#2b3a58);border:1px solid #1a1a1a;border-radius:8px 8px 4px 4px"></div>
<div class="abs" style="left:1034px;top:38px;width:243px;height:35px;border-radius:7px 7px 3px 3px;background:linear-gradient(107deg,rgba(255,255,255,0.055) 0,rgba(255,255,255,0.055) 34%,rgba(255,255,255,0) 34.6%)"></div>
<div class="abs" style="left:1044px;top:48px;font-size:17px;line-height:20px;color:#fff;transform:scaleX(0.9);transform-origin:0 0">Search</div>
<div class="abs" style="left:1246px;top:44px;width:24px;height:25px;border:1.5px solid #9aa4b4;border-radius:5px;background:#1e2a40">
<div style="position:absolute;left:1.5px;top:1.5px;width:18px;height:19px;border-radius:3px;background:linear-gradient(#8a98a8 0,#8a98a8 4px,#2e5a62 5px,#3c7a78 100%)"></div>
<svg style="position:absolute;left:0;top:0" width="22" height="23" viewBox="0 0 22 23"><path d="M6.5,7 L15.5,16 M15.5,7 L6.5,16" stroke="#fff" stroke-width="2.2"/></svg></div>
<div class="btn" style="top:82px;height:74px"><div class="t" style="top:26px;line-height:20px">Max Search</div></div>
<div class="btn" style="top:166px;height:74px"><div class="t" style="top:26px;line-height:20px">Min Search</div></div>
<div class="btn" style="top:249px;height:73px"><div class="t" style="left:0;right:16px;font-size:15.2px;top:11px;line-height:20px">Search Range</div><div class="sub" style="top:43px">User 1</div><div class="arr" style="top:15px"></div></div>
<div class="btn" style="top:332px;height:74px"><div class="t" style="top:11px;line-height:20px">User Start</div><div class="sub" style="top:43px">400 MHz</div></div>
<div class="btn" style="top:415px;height:74px"><div class="t" style="top:11px;line-height:20px">User Stop</div><div class="sub" style="top:43px">6 GHz</div></div>
<div class="abs" style="left:1039px;top:499px;width:143px;height:73px;border:1px solid #3c3c3c;border-radius:6px;background:linear-gradient(#8a8a94,#7a7a84);box-shadow:inset 0 1px 1px rgba(255,255,255,.2)"></div>
<div class="btn" style="top:582px;height:72px"><div class="t" style="left:0;right:16px;top:11px;line-height:20px">Tracking</div><div class="sub" style="top:43px">Max</div><div class="arr" style="top:15px"></div></div>
<div class="btn" style="top:666px;height:73px"><div class="t" style="top:25px;line-height:20px">Search...</div></div>
<div class="sb" style="left:5px;top:756px;width:53px">Tr 3</div>
<div class="sb" style="left:60px;top:756px;width:61px">Ch 1</div>
<div class="sb" style="left:123px;top:756px;width:70px">IntTrig</div>
<div class="sb" style="left:195px;top:756px;width:61px">Swp *</div>
<div class="sb" style="left:258px;top:756px;width:73px">BW=1k</div>
<div class="sb" style="left:333px;top:756px;width:85px">C&nbsp;&nbsp;2-Port</div>
<div class="sb dis" style="left:420px;top:756px;width:67px">SrcCal</div>
<div class="sb dis" style="left:489px;top:756px;width:54px">Sim</div>
<div class="sb dis" style="left:545px;top:756px;width:61px">Pulse</div>
<div class="sb" style="left:608px;top:756px;width:674px"></div>
<div class="sb dis" style="left:4px;top:780px;width:48px">Svc</div>
<div class="sb" style="left:54px;top:780px;width:61px">RFOn</div>
<div class="sb" style="left:117px;top:780px;width:73px">UpdateOn</div>
<div class="sb" style="left:192px;top:780px;width:60px">IntRef</div>
<div class="sb" style="left:254px;top:780px;width:859px;text-align:left;padding-left:4px">E0183.1.csa has been saved.</div>
<div class="sb" style="left:1114px;top:780px;width:49px">LCL</div>
<div class="sb" style="left:1166px;top:780px;width:116px;font-size:12px">2023/09/04-14:36</div>
<svg class="abs" style="left:0;top:0;pointer-events:none" width="1286" height="806"><g font-family="Liberation Serif" font-weight="bold" font-size="66" fill="rgba(40,40,40,0.12)"><text x="205" y="367">w</text><text x="259" y="367">w</text><text x="313" y="367">w</text><text x="367.5" y="367">.</text><text x="387" y="367">x</text><text x="431" y="367">a</text><text x="469" y="367">h</text><text x="514" y="367">x</text><text x="555" y="367">m</text><text x="611" y="367">i</text><text x="638" y="367">c</text><text x="673" y="367">r</text><text x="707" y="367">o</text><text x="748" y="367">w</text><text x="803" y="367">a</text><text x="840" y="367">v</text><text x="881" y="367">e</text><text x="918" y="367">.</text><text x="940" y="367">c</text><text x="976.5" y="367">o</text><text x="1016" y="367">m</text></g></svg>
</body></html>
